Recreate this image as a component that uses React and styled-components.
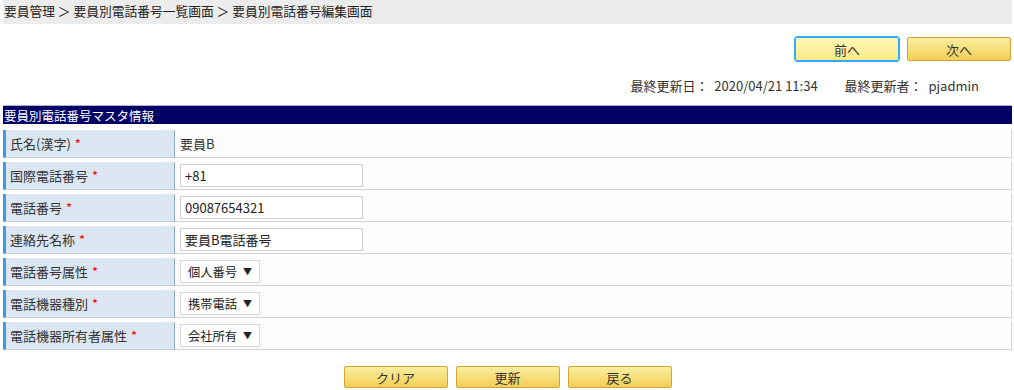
import React from "react";
import styled, { createGlobalStyle } from "styled-components";

const GlobalStyle = createGlobalStyle`
  body {
    margin: 0;
    background: #fff;
    font-family: "Noto Sans CJK JP", "Noto Sans", sans-serif;
    font-size: 13px;
    color: #333;
  }
`;

const Page = styled.div`
  padding: 0 2px 0 3px;
  width: 1014px;
  box-sizing: border-box;
`;

const Breadcrumb = styled.div`
  height: 24px;
  line-height: 22px;
  background: #ececec;
  padding-left: 1px;
  color: #222;
  font-size: 12.75px;
  white-space: pre;
`;

const NavRow = styled.div`
  display: flex;
  justify-content: flex-end;
  gap: 8px;
  margin-top: 13px;
  padding-right: 1px;
`;

const Button = styled.button`
  width: 104px;
  height: ${(p) => (p.$small ? "22px" : "24px")};
  box-sizing: border-box;
  font-family: inherit;
  font-size: 13px;
  color: #333;
  border-radius: 2px;
  padding: 0;
  border: 1px solid ${(p) => (p.$focus ? "#33aaff" : "#d9a038")};
  outline: ${(p) => (p.$focus ? "1px solid #33aaff" : "none")};
  background: ${(p) =>
    p.$focus
      ? "linear-gradient(#fff8b8, #fbe98a)"
      : "linear-gradient(#fbeea0, #f2cf55)"};
`;

const UpdateInfo = styled.div`
  display: flex;
  justify-content: flex-end;
  gap: 27px;
  margin-top: 16px;
  padding-right: 33px;
  height: 18px;
  line-height: 18px;
  font-size: 13px;
  white-space: pre;
`;

const Header = styled.div`
  margin-top: 10px;
  height: 19px;
  line-height: 19px;
  background: #000066;
  border-top: 1px solid #b0b0c8;
  color: #fff;
  font-size: 12.5px;
  padding-left: 1px;
  box-sizing: border-box;
`;

const Form = styled.div`
  display: flex;
  flex-direction: column;
  gap: 4px;
  margin-top: 6px;
`;

const Row = styled.div`
  display: flex;
  height: 28px;
`;

const Label = styled.div`
  width: 172px;
  flex-shrink: 0;
  background: #dce6f2;
  border-left: 3px solid #3d9be0;
  border-right: 1px solid #8ea5c4;
  border-bottom: 1px solid #c6d0de;
  padding-left: 4px;
  display: flex;
  align-items: center;
  box-sizing: border-box;
  font-size: 13px;
`;

const Required = styled.span`
  color: #ff0000;
  margin-left: 4px;
  font-size: 13px;
`;

const Value = styled.div`
  flex: 1;
  background: #fcfcfc;
  border-right: 1px solid #ccd2e0;
  border-bottom: 1px solid #ccd2e0;
  display: flex;
  align-items: center;
  padding-left: 5px;
  box-sizing: border-box;
`;

const Input = styled.div`
  width: 183px;
  height: 23px;
  box-sizing: border-box;
  border: 1px solid #cfcfcf;
  background: #fff;
  padding-left: 4px;
  line-height: 21px;
  color: #222;
  font-size: 13px;
`;

const Select = styled.div`
  width: 80px;
  height: 23px;
  box-sizing: border-box;
  border: 1px solid #d8d8d8;
  background: #fff;
  display: flex;
  align-items: center;
  justify-content: space-between;
  padding: 0 7px 0 7px;
  color: #222;
  font-size: 12.25px;

  & > .arrow {
    font-size: 9px;
  }
`;

const Footer = styled.div`
  display: flex;
  justify-content: center;
  gap: 8px;
  margin-top: 16px;
`;

const rows = [
  { label: "氏名(漢字)", text: "要員B" },
  { label: "国際電話番号", input: "+81" },
  { label: "電話番号", input: "09087654321" },
  { label: "連絡先名称", input: "要員B電話番号" },
  { label: "電話番号属性", select: "個人番号" },
  { label: "電話機器種別", select: "携帯電話" },
  { label: "電話機器所有者属性", select: "会社所有" },
];

const App = () => {
  return (
    <>
      <GlobalStyle />
      <Page>
        <Breadcrumb>
          {"要員管理 ＞ 要員別電話番号一覧画面 ＞ 要員別電話番号編集画面"}
        </Breadcrumb>
        <NavRow>
          <Button $focus>前へ</Button>
          <Button>次へ</Button>
        </NavRow>
        <UpdateInfo>
          <span>{"最終更新日：  2020/04/21 11:34"}</span>
          <span>{"最終更新者：  pjadmin"}</span>
        </UpdateInfo>
        <Header>要員別電話番号マスタ情報</Header>
        <Form>
          {rows.map((r) => (
            <Row key={r.label}>
              <Label>
                {r.label}
                <Required>*</Required>
              </Label>
              <Value>
                {r.text && <span>{r.text}</span>}
                {r.input && <Input>{r.input}</Input>}
                {r.select && (
                  <Select>
                    <span>{r.select}</span>
                    <span className="arrow">▼</span>
                  </Select>
                )}
              </Value>
            </Row>
          ))}
        </Form>
        <Footer>
          <Button $small>クリア</Button>
          <Button $small>更新</Button>
          <Button $small>戻る</Button>
        </Footer>
      </Page>
    </>
  );
};

export default App;
